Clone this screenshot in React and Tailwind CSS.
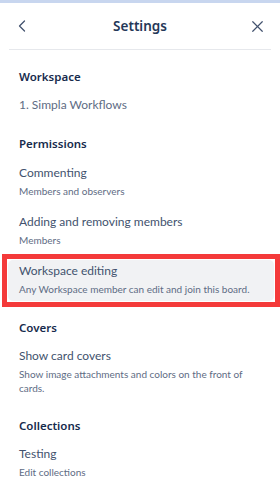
import { ChevronLeft, X } from 'lucide-react'

const font = { fontFamily: 'Lato, "Noto Sans", sans-serif' }
const headFont = { fontFamily: '"Noto Sans", Lato, sans-serif' }

function SectionTitle({ children, className = '' }) {
  return (
    <div className={`text-[11.5px] leading-[20px] font-semibold text-[#172b4d] ${className}`} style={headFont}>
      {children}
    </div>
  )
}

function Item({ title, desc, className = '' }) {
  return (
    <div className={className}>
      <div className="text-[12px] leading-[20px] text-[#42526e]">{title}</div>
      {desc && <div className="text-[10px] leading-[16px] text-[#5e6c84]">{desc}</div>}
    </div>
  )
}

export default function App() {
  return (
    <div className="w-[280px] h-[493px] bg-white overflow-hidden" style={font}>
      <div className="h-[3px] bg-[#c8d6ef]" />

      <div className="h-[46px] flex items-center justify-between pl-[12px] pr-[13px]">
        <ChevronLeft className="w-[20px] h-[20px] text-[#42526e]" strokeWidth={1.5} />
        <span className="text-[13.5px] font-semibold text-[#253858]" style={headFont}>Settings</span>
        <X className="w-[19px] h-[19px] text-[#42526e]" strokeWidth={1.5} />
      </div>
      <div className="mx-[9px] h-px bg-[#e6e8ec]" />

      <div className="px-[19px]">
        <SectionTitle className="mt-[17px]">Workspace</SectionTitle>
        <div className="mt-[8px] text-[12px] leading-[20px] text-[#5e6c84]">1. Simpla Workflows</div>

        <SectionTitle className="mt-[19px]">Permissions</SectionTitle>
        <Item className="mt-[9px]" title="Commenting" desc="Members and observers" />
        <Item className="mt-[13px]" title="Adding and removing members" desc="Members" />
      </div>

      <div className="mt-[6px] ml-[2px] w-[278px] border-[5px] border-[#f43a3a]">
        <div className="m-[1px] rounded-[5px] bg-[#f1f2f4] pl-[11px] pt-[1px] pb-[4px]">
          <Item title="Workspace editing" desc="Any Workspace member can edit and join this board." />
        </div>
      </div>

      <div className="px-[19px]">
        <SectionTitle className="mt-[11px]">Covers</SectionTitle>
        <div className="mt-[8px]">
          <div className="text-[12px] leading-[20px] text-[#42526e]">Show card covers</div>
          <div className="mt-[1px] w-[234px] text-[10px] leading-[14px] text-[#5e6c84]">
            Show image attachments and colors on the front of cards.
          </div>
        </div>

        <SectionTitle className="mt-[21px]">Collections</SectionTitle>
        <Item className="mt-[8px]" title="Testing" desc="Edit collections" />
      </div>
    </div>
  )
}
